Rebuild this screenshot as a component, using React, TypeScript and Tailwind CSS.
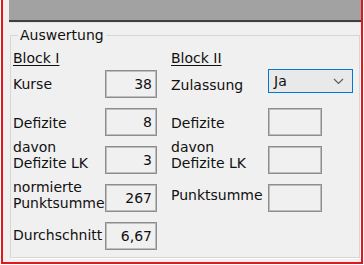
import React from 'react';

type Row = {
  label: string[];
  value?: string;
  labelOffset: string;
};

const leftRows: Row[] = [
  { label: ['Kurse'], value: '38', labelOffset: 'mt-[6px]' },
  { label: ['Defizite'], value: '8', labelOffset: 'mt-[7px]' },
  { label: ['davon', 'Defizite LK'], value: '3', labelOffset: '-mt-[7px]' },
  { label: ['normierte', 'Punktsumme'], value: '267', labelOffset: '-mt-[5px]' },
  { label: ['Durchschnitt'], value: '6,67', labelOffset: 'mt-[5px]' },
];

const rightRows: Row[] = [
  { label: ['Defizite'], labelOffset: 'mt-[7px]' },
  { label: ['davon', 'Defizite LK'], labelOffset: '-mt-[7px]' },
  { label: ['Punktsumme'], labelOffset: 'mt-[3px]' },
];

const ValueBox: React.FC<{ value?: string; width: string }> = ({ value, width }) => (
  <div
    className={`${width} h-[28px] shrink-0 border border-[#8d8d8d] shadow-[inset_0_0_0_1px_#bdbdbd] bg-[#f0f0f0] flex items-center justify-end pr-[4px]`}
  >
    {value}
  </div>
);

const Label: React.FC<{ lines: string[]; offset: string; width: string }> = ({ lines, offset, width }) => (
  <div className={`${width} shrink-0 ${offset} whitespace-nowrap`}>
    {lines.map((l) => (
      <div key={l}>{l}</div>
    ))}
  </div>
);

const App: React.FC = () => {
  return (
    <div
      className="w-[364px] h-[265px] bg-white text-[14px] leading-[16px] text-[#111] overflow-hidden"
      style={{ fontFamily: '"DejaVu Sans", Tahoma, sans-serif' }}
    >
      <div className="ml-[1px] w-[362px] h-[264px] border-x-2 border-b-2 border-[#e3161c] bg-[#f0f0f0] flex flex-col">
        {/* top bar */}
        <div className="flex h-[22px] shrink-0">
          <div className="w-[6px]" />
          <div className="flex-1 bg-[#a2a2a2] border-b-2 border-[#3f3f3f]" />
        </div>
        <div className="h-[1px] bg-[#e4e4e4] ml-[6px]" />

        <fieldset className="mt-[4px] ml-[7px] mr-[1px] h-[231px] border border-[#d6d6d6] shadow-[1px_1px_0_#ffffff] px-[2px] pt-[7px]">
          <legend className="ml-[5px] px-[2px]">Auswertung</legend>

          <div className="flex gap-[14px]">
            {/* Block I */}
            <div className="flex flex-col">
              <div className="h-[16px] underline underline-offset-[2px] mb-[4px]">Block I</div>
              <div className="flex flex-col gap-[10px]">
                {leftRows.map((r) => (
                  <div key={r.label.join()} className="flex items-start h-[28px]">
                    <Label lines={r.label} offset={r.labelOffset} width="w-[92px]" />
                    <ValueBox value={r.value} width="w-[52px]" />
                  </div>
                ))}
              </div>
            </div>

            {/* Block II */}
            <div className="flex flex-col">
              <div className="h-[16px] underline underline-offset-[2px] mb-[4px]">Block II</div>
              <div className="flex flex-col gap-[10px]">
                <div className="flex items-start h-[28px]">
                  <Label lines={['Zulassung']} offset="mt-[7px]" width="w-[97px]" />
                  <div className="-mt-[1px] w-[85px] h-[24px] border border-[#0078d7] bg-[#e9e9e9] flex items-center pl-[5px] pr-[8px]">
                    <span className="flex-1">Ja</span>
                    <svg width="11" height="7" viewBox="0 0 11 7" fill="none">
                      <polyline points="1,1 5.5,5.5 10,1" stroke="#5f5f5f" strokeWidth="1.2" />
                    </svg>
                  </div>
                </div>
                {rightRows.map((r) => (
                  <div key={r.label.join()} className="flex items-start h-[28px]">
                    <Label lines={r.label} offset={r.labelOffset} width="w-[97px]" />
                    <ValueBox width="w-[54px]" />
                  </div>
                ))}
              </div>
            </div>
          </div>
        </fieldset>
      </div>
    </div>
  );
};

export default App;
